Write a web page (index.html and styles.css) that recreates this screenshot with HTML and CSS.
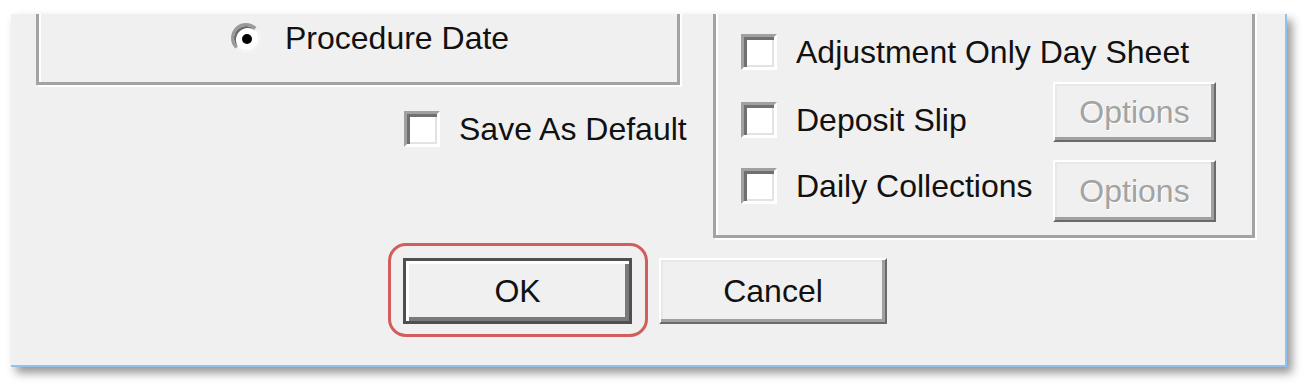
FILE: index.html
```html
<!DOCTYPE html>
<html lang="en">
<head>
<meta charset="utf-8">
<title>Day Sheet Options</title>
<link rel="stylesheet" href="styles.css">
</head>
<body>
<div class="stage">
  <div class="panel">
    <div class="top-row">
      <div class="left-col">
        <div class="groupbox group-left">
          <div class="radio-row">
            <span class="radio checked"></span>
            <span class="label">Procedure Date</span>
          </div>
        </div>
        <div class="check-row save-row">
          <span class="checkbox"></span>
          <span class="label">Save As Default</span>
        </div>
      </div>
      <div class="groupbox group-right">
        <div class="opt-row row-1">
          <span class="checkbox"></span>
          <span class="label opt-label">Adjustment Only Day Sheet</span>
        </div>
        <div class="opt-row row-2">
          <span class="checkbox"></span>
          <span class="label opt-label">Deposit Slip</span>
          <button class="btn btn-options" disabled>Options</button>
        </div>
        <div class="opt-row row-3">
          <span class="checkbox"></span>
          <span class="label opt-label">Daily Collections</span>
          <button class="btn btn-options" disabled>Options</button>
        </div>
      </div>
    </div>
    <div class="button-row">
      <button class="btn btn-default btn-ok">OK</button>
      <button class="btn btn-cancel">Cancel</button>
    </div>
  </div>
</div>
</body>
</html>
```
FILE: styles.css
```css
* { box-sizing: border-box; }

html, body {
  margin: 0;
  padding: 0;
  background: #ffffff;
}

body {
  font-family: "Liberation Sans", Arial, sans-serif;
  font-size: 32px;
  color: #111111;
}

.stage {
  padding: 14px 0 0 11px;
  width: 1314px;
  height: 392px;
}

.panel {
  width: 1276px;
  height: 353px;
  background: #f0f0f0;
  border-right: 2px solid #92c1ee;
  border-bottom: 2px solid #92c1ee;
  box-shadow: 5px 6px 9px rgba(0, 0, 0, 0.42);
  overflow: hidden;
  padding-left: 25px;
  display: flex;
  flex-direction: column;
}

.top-row {
  display: flex;
  align-items: flex-start;
  gap: 33px;
}

.left-col {
  display: flex;
  flex-direction: column;
  width: 644px;
}

.groupbox {
  border: 3px solid #a3a3a3;
  box-shadow: inset 2px 2px 0 #ffffff, 2px 2px 0 #ffffff;
  margin-top: -20px;
}

.group-left {
  width: 644px;
  height: 91px;
  padding: 23px 0 0 192px;
}

.radio-row {
  display: flex;
  align-items: center;
  height: 36px;
  gap: 24px;
}

.radio {
  width: 30px;
  height: 30px;
  border-radius: 50%;
  background: #ffffff;
  border: 3px solid;
  border-color: #9a9a9a #f4f4f4 #f4f4f4 #9a9a9a;
  box-shadow: inset 2px 2px 0 #6c6c6c;
  display: flex;
  align-items: center;
  justify-content: center;
  flex: none;
}

.radio.checked::before {
  content: "";
  width: 10px;
  height: 10px;
  border-radius: 50%;
  background: #000000;
  margin: 1px 0 0 1px;
}

.label {
  line-height: 36px;
  white-space: nowrap;
}

.check-row {
  display: flex;
  align-items: center;
  gap: 19px;
}

.save-row {
  margin: 26px 0 0 368px;
}

.checkbox {
  width: 36px;
  height: 36px;
  flex: none;
  background: #ffffff;
  border: 3px solid;
  border-color: #a0a0a0 #ffffff #ffffff #a0a0a0;
  box-shadow: inset 3px 3px 0 #707070, inset -2px -2px 0 #e3e3e3;
}

.group-right {
  width: 542px;
  height: 244px;
  padding: 37px 0 0 25px;
  display: flex;
  flex-direction: column;
}

.opt-row {
  display: flex;
  align-items: flex-start;
}

.opt-row .checkbox {
  margin-right: 19px;
}

.opt-label {
  width: 257px;
}

.row-2 { margin-top: 12px; }
.row-2 .checkbox, .row-2 .opt-label { margin-top: 20px; }

.row-3 { margin-top: 18px; }
.row-3 .checkbox, .row-3 .opt-label { margin-top: 8px; }

.btn {
  font-family: "Liberation Sans", Arial, sans-serif;
  font-size: 32px;
  color: #111111;
  background: #f0f0f0;
  padding: 0;
  margin: 0;
  border: 2px solid;
  border-color: #ffffff #6a6a6a #6a6a6a #ffffff;
  box-shadow: inset -3px -3px 0 #a0a0a0, inset 2px 2px 0 #e8e8e8;
  display: flex;
  align-items: center;
  justify-content: center;
  flex: none;
}

.btn-options {
  width: 163px;
  height: 60px;
  color: #a3a3a3;
  text-shadow: 1px 1px 0 #ffffff;
}

.row-3 .btn-options { height: 62px; }

.button-row {
  display: flex;
  gap: 27px;
  margin-top: 20px;
  padding-left: 367px;
}

.btn-ok {
  width: 229px;
  height: 66px;
  position: relative;
}

.btn-default {
  border: 3px solid #4f4f4f;
  box-shadow: inset 3px 3px 0 #ffffff, inset -4px -4px 0 #7a7a7a;
}

.btn-ok::after {
  content: "";
  position: absolute;
  top: -18px;
  left: -18px;
  right: -19px;
  bottom: -16px;
  border: 3px solid #d35c5c;
  border-radius: 18px;
  pointer-events: none;
}

.btn-cancel {
  width: 228px;
  height: 66px;
}
```
